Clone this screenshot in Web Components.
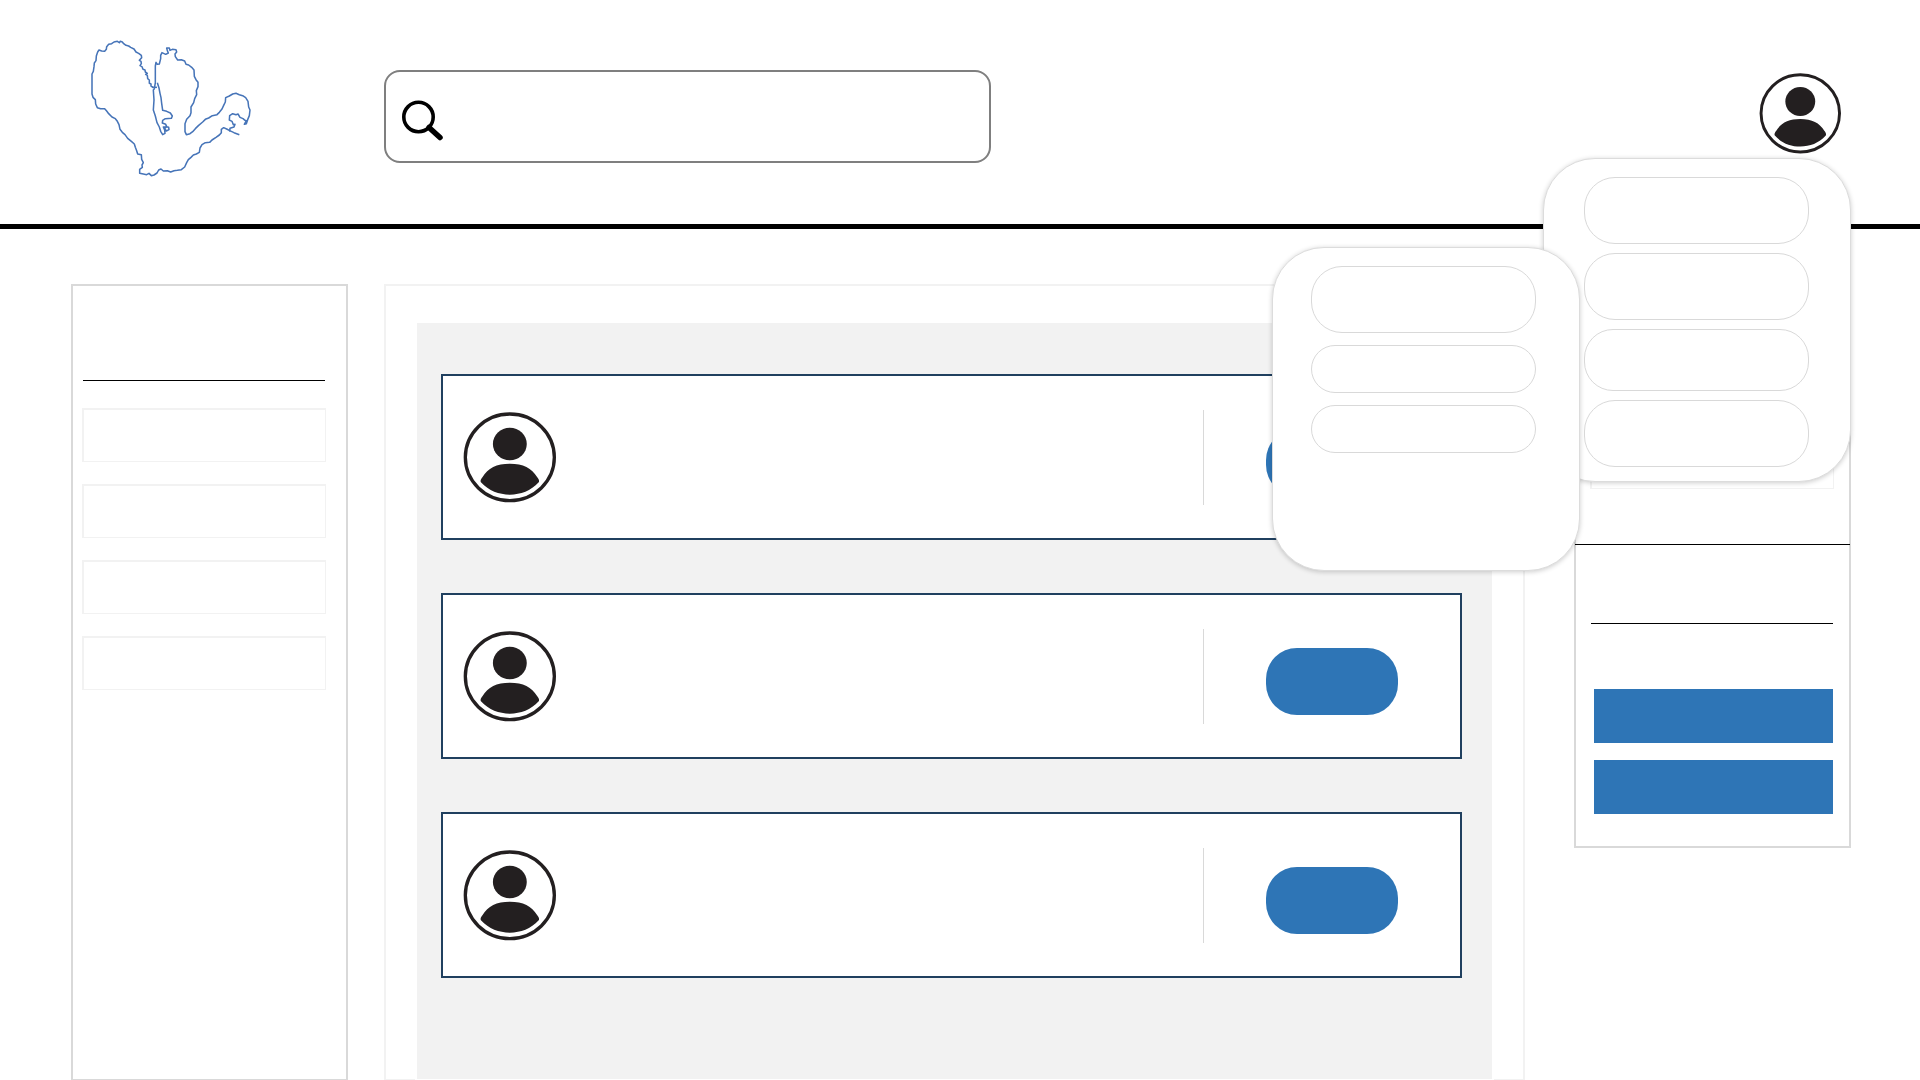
<!DOCTYPE html>
<html lang="en">
<head>
<meta charset="utf-8">
<title>Dashboard</title>
<style>
  html, body { margin: 0; background: #fff; font-family: "Liberation Sans", Arial, sans-serif; }
</style>
</head>
<body>
<app-page></app-page>
<script>
const define = (name, html) => {
  const template = document.createElement('template');
  template.innerHTML = html;
  customElements.define(name, class extends HTMLElement {
    constructor() {
      super();
      this.attachShadow({ mode: 'open' }).append(template.content.cloneNode(true));
    }
  });
};

define('brand-logo', `
<style>
  :host { display: block; flex: none; width: 180px; height: 160px; }
  svg { display: block; width: 100%; height: 100%; }
</style>
<svg viewBox="0 0 540 480" fill="none" stroke="#4674b8" stroke-width="4.600" stroke-linejoin="round" aria-hidden="true">
  <path d="M219 172L213 168L213 162L208 160L208 150L203 146L202 136L197 133L202 130L196 126L195 120L189 118L186 110L180 107L184 101L183 94L178 91L185 83L184 76L176 70L168 66L162 57L152 52L146 48L138 46L131 41L127 36L121 34L118 38L112 34L102 36L95 41L86 43L80 50L79 58L74 64L65 63L57 60L53 66L49 78L48 92L43 99L42 110L40 124L36 132L36 192L39 202L46 209L47 222L52 233L62 236L74 236L80 243L86 251L96 261L106 266L112 274L117 284L120 298L127 307L135 314L143 325L155 335L163 342L166 352L170 362L173 372L184 374L185 388L190 398L186 405L187 412L179 418L179 430L190 432L200 434L207 430L214 437L222 435L231 429L236 420L243 417L250 423L262 422L272 426L282 422L292 421L304 419L314 411L320 398L325 389L333 382L340 375L349 372L358 367L360 354L366 344L376 338L389 337L396 330L408 322L418 315L424 308L424 298L431 293L440 297L449 302L462 308L478 314"/>
  <path d="M449 305L450 295L462 291L465 283L460 284L456 274L448 270L449 257L458 251L468 254L474 252L480 262L489 266L495 271L499 272L493 283L499 281L503 269L508 257L510 240L506 231L504 214L497 203L488 197L478 194L468 190L458 192L448 198L437 203L436 216L431 226L426 237L418 247L411 254L397 257L386 264L376 268L368 276L356 286L346 296L338 305L330 311L319 314L315 305L315 281L320 268L330 257L333 248L333 231L341 218L344 206L350 194L349 182L354 170L354 157L348 149L343 139L342 120L335 112L326 105L318 103L314 93L304 89L293 90L286 80L285 72L290 66L288 59L277 58L270 61L268 54L260 54L262 62L265 69L257 73L246 68L242 76L242 86L238 102L232 103L228 97L226 108L226 158L223 176L220 180L222 210L220 240L226 258L231 278L238 291L242 304L248 314L255 310L254 300L250 291L258 290L266 292L267 299L259 303L254 295L260 290L257 283L247 279L248 271L256 266L274 265L277 258L271 249L260 244L248 241L245 220L243 203L240 190L237 174L232 158"/>
  <path d="M216 172L231 172"/>
</svg>`);

define('user-avatar', `
<style>
  :host { display: block; flex: none; width: 93px; height: 91px; }
  svg { display: block; width: 100%; height: 100%; }
</style>
<svg viewBox="0 0 280 273" preserveAspectRatio="none" aria-hidden="true">
  <ellipse cx="141" cy="136" rx="134" ry="130" fill="#fff" stroke="#231f20" stroke-width="10"/>
  <ellipse cx="141" cy="96" rx="51" ry="49" fill="#231f20"/>
  <path transform="translate(1 0)" d="M53 211C50 206 54 200 58 195C74 168 100 155 140 155C180 155 206 168 222 195C226 200 230 206 227 211C203 237 173 248 140 248C107 248 77 237 53 211Z" fill="#231f20"/>
</svg>`);

define('search-box', `
<style>
  :host { display: block; }
  label { box-sizing: border-box; display: flex; align-items: center; gap: 16px; height: 93px; padding: 0 16px;
    border: 2px solid #7f7f7f; border-radius: 16px; background: #fff; }
  svg { flex: none; width: 42px; height: 50px; }
  input { flex: 1; min-width: 0; height: 60px; border: 0; outline: 0; background: none; font: 24px "Liberation Sans", Arial, sans-serif; }
</style>
<label>
  <svg viewBox="0 0 42 50" fill="none" stroke="#000" aria-hidden="true">
    <circle cx="16.500" cy="25" r="14.700" stroke-width="3.600"/>
    <path d="M27 35.500L38 45.500" stroke-width="5.500" stroke-linecap="round"/>
  </svg>
  <input type="search" aria-label="Search">
</label>`);

define('app-header', `
<style>
  :host { box-sizing: border-box; display: flex; align-items: flex-start; height: 229px; padding: 30px 79px 0 80px; border-bottom: 5px solid #000; }
  search-box { flex: 0 1 607px; margin: 40px 0 0 124px; }
  button { margin: 43px 0 0 auto; padding: 0; border: 0; background: none; }
  user-avatar { width: 82px; height: 81px; }
</style>
<brand-logo></brand-logo>
<search-box></search-box>
<button type="button" aria-label="Account"><user-avatar></user-avatar></button>`);

define('nav-panel', `
<style>
  :host { box-sizing: border-box; display: flex; flex-direction: column; padding: 94px 16px 0 9px; border: 2px solid #d9d9d9; border-bottom-width: 1px; }
  hr { width: 242px; height: 1px; margin: 0 auto 27px 1px; border: 0; background: #000; }
  nav { display: flex; flex-direction: column; gap: 22px; }
  button { width: 244px; height: 54px; padding: 0; border: solid #f2f2f2; border-width: 2px 1px 1px 2px; background: none; }
</style>
<hr>
<nav>
  <button type="button" aria-label="Item 1"></button>
  <button type="button" aria-label="Item 2"></button>
  <button type="button" aria-label="Item 3"></button>
  <button type="button" aria-label="Item 4"></button>
</nav>`);

define('user-card', `
<style>
  :host { box-sizing: border-box; display: flex; align-items: center; height: 166px; padding: 0 62px 0 20px; border: 2px solid #20405f; background: #fff; }
  .rule { width: 1px; height: 95px; margin: 0 62px 0 auto; background: #d9d9d9; }
  .action { padding-top: 10px; }
  button { display: block; width: 132px; height: 67px; padding: 0; border: 0; border-radius: 31px; background: #2e75b6; }
</style>
<user-avatar></user-avatar>
<div class="rule"></div>
<div class="action"><button type="button" aria-label="Connect"></button></div>`);

define('card-board', `
<style>
  :host { box-sizing: border-box; display: flex; padding: 37px 29px 0; border: 2px solid #f2f2f2; border-bottom-width: 1px; }
  .board { flex: 1; display: flex; flex-direction: column; gap: 53px; margin-bottom: -1px; padding: 51px 30px 100px 24px;
    border: solid #fff; border-width: 0 2px 1px; background: #f2f2f2; }
</style>
<div class="board"><slot></slot></div>`);

define('side-panel', `
<style>
  :host { box-sizing: border-box; display: flex; flex-direction: column; height: 564px; border: 2px solid #d9d9d9; }
  hr { flex: none; height: 1px; margin: 0; border: 0; background: #000; }
  .top { height: 203px; padding: 55px 15px 0 14px; box-sizing: border-box; margin-top: 55px; }
  .field { height: 55px; margin-top: 38px; box-sizing: border-box; border: solid #f2f2f2; border-width: 1px 1px 1px 2px; }
  .divider { margin: 0 -1px; }
  .bottom { display: flex; flex-direction: column; padding: 78px 16px 0 15px; }
  .actions { display: flex; flex-direction: column; gap: 17px; padding: 65px 0 0 3px; }
  button { height: 54px; padding: 0; border: 0; background: #2e75b6; }
</style>
<div class="top"><div class="field"></div></div>
<hr class="divider">
<div class="bottom">
  <hr>
  <div class="actions">
    <button type="button" aria-label="Action 1"></button>
    <button type="button" aria-label="Action 2"></button>
  </div>
</div>`);

define('popup-menu', `
<style>
  :host { box-sizing: border-box; display: flex; flex-direction: column; width: 308px; height: 324px; border: 1px solid #dcdcdc;
    border-radius: 52px; background: #fff; box-shadow: 0 1px 5px rgba(0, 0, 0, .2); }
</style>
<slot></slot>`);

define('app-page', `
<style>
  :host { position: relative; display: flex; flex-direction: column; min-height: 100vh; }
  main { flex: 1; display: flex; padding: 55px 69px 0 71px; }
  nav-panel, side-panel { flex: none; width: 277px; }
  card-board { flex: 1; margin: 0 49px 0 36px; }
  side-panel { align-self: flex-start; }
  popup-menu { position: absolute; }
  .account { top: 158px; right: 69px; gap: 9px; padding: 18px 0 0 40px; }
  .options { top: 247px; right: 340px; gap: 12px; padding: 18px 0 0 38px; }
  popup-menu button { flex: none; width: 225px; height: 67px; padding: 0; border: 1px solid #d9d9d9; border-radius: 31px; background: none; }
  .account .short { height: 62px; border-radius: 29px; }
  .options .short { height: 48px; border-radius: 24px; }
</style>
<app-header></app-header>
<main>
  <nav-panel></nav-panel>
  <card-board>
    <user-card></user-card>
    <user-card></user-card>
    <user-card></user-card>
  </card-board>
  <side-panel></side-panel>
</main>
<popup-menu class="account">
  <button type="button" aria-label="Account item 1"></button>
  <button type="button" aria-label="Account item 2"></button>
  <button type="button" class="short" aria-label="Account item 3"></button>
  <button type="button" aria-label="Account item 4"></button>
</popup-menu>
<popup-menu class="options">
  <button type="button" aria-label="Option 1"></button>
  <button type="button" class="short" aria-label="Option 2"></button>
  <button type="button" class="short" aria-label="Option 3"></button>
</popup-menu>`);
</script>
</body>
</html>
